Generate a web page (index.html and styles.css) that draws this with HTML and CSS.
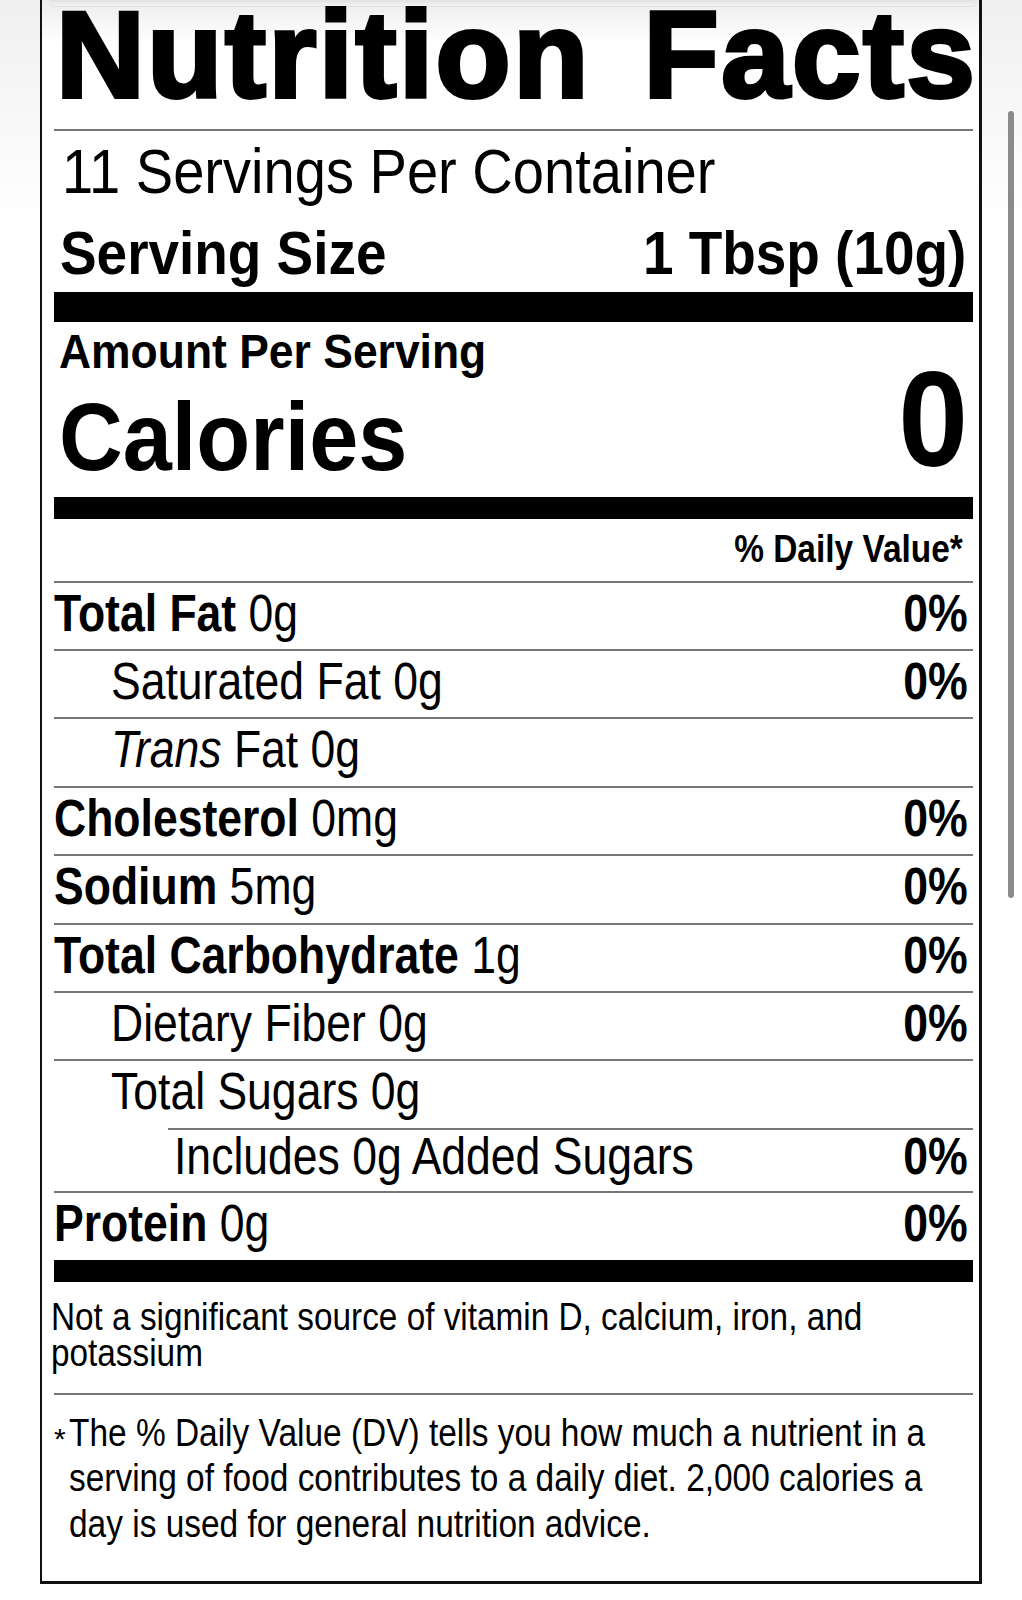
FILE: index.html
```html
<!DOCTYPE html>
<html lang="en">
<head>
<meta charset="utf-8">
<title>Nutrition Facts</title>
<link rel="stylesheet" href="styles.css">
</head>
<body>
<div class="scrollbar"></div>
<section class="label">
  <div class="bezel"></div>
  <h1 class="title">Nutrition Facts</h1>
  <div class="rule"></div>
  <p class="servings"><span>11 Servings Per Container</span></p>
  <div class="serving-size"><span class="ss-name">Serving Size</span><span class="ss-value">1 Tbsp (10g)</span></div>
  <div class="bar bar-xl"></div>
  <div class="calories">
    <div class="cal-left">
      <div class="amount">Amount Per Serving</div>
      <div class="cal-label">Calories</div>
    </div>
    <div class="cal-value">0</div>
  </div>
  <div class="bar bar-lg"></div>
  <div class="dv-head"><span>% Daily Value*</span></div>
  <div class="row"><span class="nm"><b>Total Fat</b> 0g</span><b class="pct">0%</b></div>
  <div class="row sub"><span class="nm">Saturated Fat 0g</span><b class="pct">0%</b></div>
  <div class="row sub"><span class="nm"><i>Trans</i> Fat 0g</span></div>
  <div class="row"><span class="nm"><b>Cholesterol</b> 0mg</span><b class="pct">0%</b></div>
  <div class="row"><span class="nm"><b>Sodium</b> 5mg</span><b class="pct">0%</b></div>
  <div class="row"><span class="nm"><b>Total Carbohydrate</b> 1g</span><b class="pct">0%</b></div>
  <div class="row sub"><span class="nm">Dietary Fiber 0g</span><b class="pct">0%</b></div>
  <div class="row sub"><span class="nm">Total Sugars 0g</span></div>
  <div class="row added"><span class="nm">Includes 0g Added Sugars</span><b class="pct">0%</b></div>
  <div class="row protein"><span class="nm"><b>Protein</b> 0g</span><b class="pct">0%</b></div>
  <div class="bar bar-lg"></div>
  <p class="not-sig">Not a significant source of vitamin D, calcium, iron, and<br>potassium</p>
  <div class="rule"></div>
  <div class="footnote"><span class="star">*</span><p class="fn-text">The % Daily Value (DV) tells you how much a nutrient in a<br>serving of food contributes to a daily diet. 2,000 calories a<br>day is used for general nutrition advice.</p></div>
</section>
</body>
</html>
```

FILE: styles.css
```css
* {
  box-sizing: border-box;
  margin: 0;
  padding: 0;
}

html {
  background: #fff;
  overflow-x: hidden;
}

body {
  margin: 0;
  font-family: "Liberation Sans", Arial, "Helvetica Neue", Helvetica, sans-serif;
  color: #000;
  background: linear-gradient(#f0f0f0, #ffffff 220px) no-repeat;
  min-height: 1600px;
}

.scrollbar {
  position: fixed;
  left: 1008px;
  top: 111px;
  width: 6px;
  height: 787px;
  border-radius: 3px;
  background: #8b8b8b;
}

.label {
  position: relative;
  margin-left: 40px;
  width: 942px;
  border-style: solid;
  border-color: #111;
  border-width: 0 3px 3px 2px;
  padding: 0 6px 33.7px 12px;
  background: linear-gradient(#ececec 0, #ffffff 42px);
}

.bezel {
  position: absolute;
  top: 0;
  left: 7px;
  right: 2px;
  height: 7px;
  border-radius: 0 0 14px 14px;
  background: linear-gradient(#e2e2e2, #f2f2f2);
  border-bottom: 1px solid #e0e0e0;
}

.title {
  position: relative;
  font-weight: 700;
  font-size: 123px;
  line-height: 110px;
  height: 110px;
  letter-spacing: 2.5px;
  word-spacing: 16px;
  -webkit-text-stroke: 4px #000;
  margin-left: 2px;
  white-space: nowrap;
}

.rule {
  height: 2px;
  background: #777;
}

.title + .rule {
  margin-top: 19px;
}

/* servings header */
.servings {
  font-size: 63px;
  line-height: 70px;
  height: 81px;
  padding: 5px 0 0 8px;
  white-space: nowrap;
}

.servings span {
  display: inline-block;
  transform: scaleX(0.89);
  transform-origin: 0 50%;
}

.serving-size {
  display: flex;
  justify-content: space-between;
  font-weight: 700;
  font-size: 61px;
  line-height: 68px;
  height: 80px;
  padding: 6.8px 6.7px 0 6px;
  white-space: nowrap;
}

.ss-name {
  transform: scaleX(0.9);
  transform-origin: 0 50%;
}

.ss-value {
  transform: scaleX(0.9);
  transform-origin: 100% 50%;
}

.bar {
  background: #000;
}

.bar-xl {
  height: 30px;
}

.bar-lg {
  height: 22px;
}

/* calories */
.calories {
  display: flex;
  justify-content: space-between;
  height: 175px;
  padding: 0 5px 0 5px;
  font-weight: 700;
  white-space: nowrap;
}

.amount {
  font-size: 48px;
  line-height: 48px;
  margin-top: 6.4px;
  transform: scaleX(0.926);
  transform-origin: 0 50%;
}

.cal-label {
  font-size: 97px;
  line-height: 97px;
  margin-top: 11.6px;
  transform: scaleX(0.91);
  transform-origin: 0 50%;
}

.cal-value {
  font-size: 135px;
  line-height: 135px;
  margin-top: 29.7px;
  height: 135px;
  transform: scaleX(0.93);
  transform-origin: 100% 50%;
}

.dv-head {
  height: 61.7px;
  padding: 8.8px 10.3px 0 0;
  font-size: 38px;
  line-height: 42px;
  font-weight: 700;
  text-align: right;
  white-space: nowrap;
}

.dv-head span {
  display: inline-block;
  transform: scaleX(0.88);
  transform-origin: 100% 50%;
}

/* nutrient rows */
.row {
  display: flex;
  justify-content: space-between;
  height: 68.4px;
  border-top: 2px solid #777;
  font-size: 51px;
  line-height: 61px;
  padding-right: 5.7px;
  white-space: nowrap;
}

.row b {
  font-weight: 700;
}

.row i {
  font-style: italic;
}

.nm {
  transform: scaleX(0.873);
  transform-origin: 0 50%;
}

.pct {
  transform: scaleX(0.875);
  transform-origin: 100% 50%;
}

.row.sub {
  padding-left: 57px;
}

.row.added {
  margin-left: 114px;
  padding-left: 6px;
  height: 63.3px;
  line-height: 53px;
}

.row.protein {
  height: 68.8px;
}

/* footer */
.not-sig {
  font-size: 38px;
  line-height: 36px;
  padding: 17.5px 0 21.5px 0;
  margin-left: -3px;
  white-space: nowrap;
  transform: scaleX(0.877);
  transform-origin: 0 50%;
}

.footnote {
  display: flex;
  padding-top: 15.8px;
  font-size: 38px;
  line-height: 45.5px;
  white-space: nowrap;
}

.star {
  flex: 0 0 15.3px;
  font-size: 30px;
  position: relative;
  top: 5px;
}

.fn-text {
  flex: 0 0 auto;
  transform: scaleX(0.88);
  transform-origin: 0 50%;
}
```
